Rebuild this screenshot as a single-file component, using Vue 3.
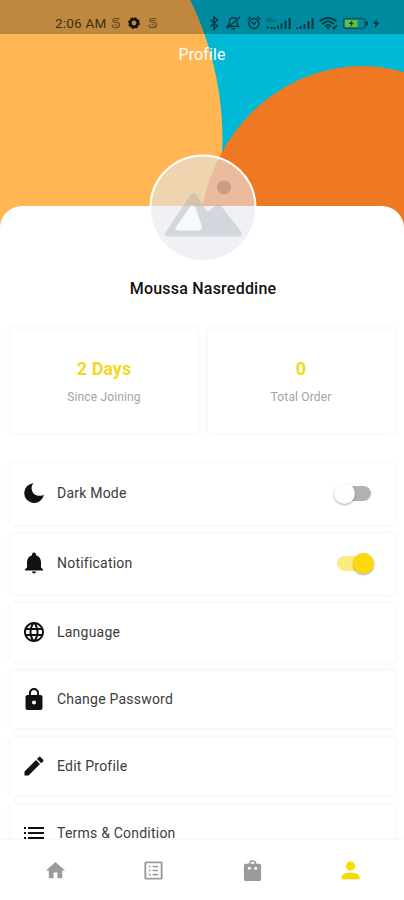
<script setup>
import { ref } from 'vue'

const stats = [
  { value: '2 Days', label: 'Since Joining' },
  { value: '0', label: 'Total Order' }
]

const settings = ref([
  { icon: 'moon', label: 'Dark Mode', toggle: true, on: false },
  { icon: 'bell', label: 'Notification', toggle: true, on: true },
  { icon: 'globe', label: 'Language' },
  { icon: 'lock', label: 'Change Password' },
  { icon: 'pencil', label: 'Edit Profile' },
  { icon: 'list', label: 'Terms & Condition' }
])

const icons = {
  moon: 'M11.500 2.200A9.900 9.900 0 1 0 21.900 13.500Q20.500 15 17.500 14.800A7.600 7.600 0 0 1 11.500 2.200z',
  bell: 'M12 22.500c1.100 0 2-.9 2-2h-4c0 1.100.9 2 2 2zm7-6V11c0-3.100-2-5.900-5-6.700V3.500a2 2 0 0 0-4 0v.8C7 5.100 5 7.900 5 11v5.500L3 18.500v1h18v-1z',
  globe: 'M11.990 2C6.470 2 2 6.480 2 12s4.470 10 9.990 10C17.520 22 22 17.520 22 12S17.520 2 11.990 2zm6.930 6h-2.950c-.32-1.250-.78-2.450-1.380-3.560 1.840.63 3.370 1.910 4.330 3.560zM12 4.040c.83 1.200 1.480 2.530 1.910 3.960h-3.820c.43-1.430 1.080-2.760 1.910-3.960zM4.260 14C4.100 13.360 4 12.690 4 12s.1-1.360.26-2h3.380c-.08.66-.14 1.320-.14 2s.06 1.340.14 2H4.260zm.82 2h2.950c.32 1.250.78 2.450 1.380 3.560-1.840-.63-3.370-1.900-4.330-3.560zm2.950-8H5.080c.96-1.660 2.490-2.930 4.330-3.560C8.810 5.550 8.350 6.750 8.030 8zM12 19.960c-.83-1.200-1.480-2.530-1.910-3.960h3.820c-.43 1.430-1.080 2.760-1.910 3.960zM14.340 14H9.660c-.09-.66-.16-1.320-.16-2s.07-1.350.16-2h4.680c.09.65.16 1.320.16 2s-.07 1.340-.16 2zm.25 5.560c.6-1.110 1.060-2.310 1.380-3.560h2.950c-.96 1.650-2.490 2.930-4.330 3.560zM16.360 14c.08-.66.14-1.320.14-2s-.06-1.340-.14-2h3.380c.16.64.26 1.310.26 2s-.1 1.360-.26 2h-3.380z',
  lock: 'M18.500 8H17V6c0-2.760-2.240-5-5-5S7 3.240 7 6v2H5.500c-1.100 0-2 .9-2 2v11c0 1.100.9 2 2 2h13c1.100 0 2-.9 2-2V10c0-1.100-.9-2-2-2zM12 17.500c-1.100 0-2-.9-2-2s.9-2 2-2 2 .9 2 2-.9 2-2 2zm3.100-9.500H8.900V6c0-1.710 1.390-3.100 3.100-3.100s3.100 1.390 3.100 3.100v2z',
  pencil: 'M2.500 17.500V21.500h4L18 10l-4-4L2.500 17.500zM21.200 7.200a1 1 0 0 0 0-1.410l-2.840-2.840a1 1 0 0 0-1.410 0l-2 2 4.250 4.250 2-2z',
  list: 'M2 6h2v2H2zm4 0h16v2H6zM2 11h2v2H2zm4 0h16v2H6zM2 16h2v2H2zm4 0h16v2H6z',
  home: 'M10 20v-6h4v6h5v-8h3L12 3 2 12h3v8z',
  orders: 'M19.500 4.500v15h-15v-15h15m.6-2H3.900c-.8 0-1.400.6-1.400 1.400v16.200c0 .8.6 1.400 1.400 1.400h16.200c.8 0 1.400-.6 1.400-1.400V3.900c0-.8-.6-1.400-1.400-1.400zM11 7h6v1.700h-6zm0 4.200h6v1.700h-6zm0 4.200h6v1.700h-6zM7 7h2v1.700H7zm0 4.200h2v1.700H7zm0 4.200h2v1.700H7z',
  bag: 'M19 5h-2.900C15.700 2.600 14.200 1 12 1S8.300 2.600 7.900 5H5c-1.100 0-2 .9-2 2v14c0 1.100.9 2 2 2h14c1.100 0 2-.9 2-2V7c0-1.100-.9-2-2-2zM12 2.700c1.200 0 2 .9 2.200 2.300H9.800C10 3.600 10.800 2.700 12 2.700zM8.700 11.300a1.600 1.600 0 1 1 0-3.200 1.600 1.600 0 0 1 0 3.200zm6.600 0a1.600 1.600 0 1 1 0-3.200 1.600 1.600 0 0 1 0 3.200z',
  person: 'M12 12a4.700 4.700 0 1 0 0-9.400 4.700 4.700 0 0 0 0 9.400zm0 2c-3 0-9.500 1.500-9.500 4.800v2.200h19v-2.200c0-3.300-6.500-4.800-9.500-4.800z'
}

const tabs = ['home', 'orders', 'bag', 'person']
const activeTab = ref('person')
</script>

<template>
  <div class="screen">
    <header class="hero">
      <svg class="hero-art" viewBox="0 0 404 240" aria-hidden="true">
        <rect width="404" height="240" fill="#00b9d6" />
        <circle cx="-97.500" cy="140" r="320" fill="#ffb653" />
        <ellipse cx="362" cy="242" rx="163" ry="176" fill="#ef7922" />
      </svg>

      <div class="status-bar">
        <div class="status-left">
          <span class="time">2:06 AM</span>
          <svg class="swirl" width="10" height="12" viewBox="0 0 10 12"><path d="M8.500 1.500H4.500C1 1.500 1 5.500 4.500 5.500H6C9.500 5.500 9.500 10.700 5 10.700S1 8.500 1.500 7.500M3.500 3.500h4M3.500 8h3" /></svg>
          <svg class="gear" width="12" height="12" viewBox="0 0 12 12"><circle cx="6" cy="6" r="3.800" /><circle class="teeth" cx="6" cy="6" r="5.300" /></svg>
          <svg class="swirl" width="10" height="12" viewBox="0 0 10 12"><path d="M8.500 1.500H4.500C1 1.500 1 5.500 4.500 5.500H6C9.500 5.500 9.500 10.700 5 10.700S1 8.500 1.500 7.500M3.500 3.500h4M3.500 8h3" /></svg>
        </div>
        <svg class="status-right" width="172" height="16" viewBox="0 0 172 16">
          <g class="line">
            <path d="M1.500 4.500l7 6.500L5 14V2l3.500 3-7 6.500" />
            <path d="M18.500 11.500h11c-1.500-1.300-1.500-3-1.500-5 0-5-7.500-5-7.500 0 0 2 0 3.700-2 5zM18 13.500L31 2M22.500 13.700h3.500" />
            <circle cx="45" cy="8.500" r="5" />
            <path d="M42.500 7l2.500 2 2.500-2M38.500 4.500l3.200-2.800M51.500 4.500l-3.200-2.800" />
          </g>
          <g class="fill">
            <path d="M68 10.500h2v3.500h-2zM71.500 8.500h2v5.500h-2zM75.500 5.500h2v8.500h-2zM79.500 3h2.200v11h-2.200zM64.500 12h2v2h-2zM57.500 11l3.500 1.500-3.500 1.500zM61.500 12h2v2h-2z" />
            <path d="M87 12.500h2v1.500h-2zM90.500 11h2v3h-2zM94.500 9h2v5h-2zM98.500 6h2v8h-2zM102.500 3h2.200v11h-2.200z" />
            <path d="M168.500 3l-4.500 6h2.700l-1 4.500 4.800-6.200h-3z" />
          </g>
          <text x="57" y="6.500">4G+</text>
          <g class="line wifi">
            <path d="M110.500 6.300c5-4.500 12-4.500 17 0M113.200 9c3.500-3.300 8-3.300 11.600 0M116 11.300c2-1.800 4-1.800 6 0" />
            <path d="M123.500 12l1.500 1.500 3-3.500" />
          </g>
          <path class="fill" d="M117 12l2 2.300 2-2.300z" />
          <rect class="shell" x="134.500" y="3.500" width="21.500" height="10" rx="2.500" />
          <rect class="charge" x="136" y="5" width="12.500" height="7" rx=".5" />
          <path class="fill" d="M143.500 5l-4 4h2.500l-1 3 4-4.200h-2.500zM157 6.500h1.800v4H157z" />
        </svg>
      </div>
      <h1 class="title">Profile</h1>
    </header>

    <main class="sheet">
      <svg class="avatar" viewBox="0 0 108 108" aria-hidden="true">
        <circle cx="54" cy="54" r="52.500" fill="#e4e7ef" fill-opacity=".6" />
        <path class="avatar-ring" d="M1.400 54a52.600 52.600 0 0 1 105.200 0" />
        <circle cx="54" cy="54" r="52.500" fill="none" stroke="#fff" stroke-opacity=".5" stroke-width="1.500" />
        <path
          fill="#8e9ca9"
          fill-opacity=".3"
          fill-rule="evenodd"
          d="M41.500 41q3-4 6 0l11 17 8.500-6.500q3-2 5.500 1l19.500 25q2 5-2 5H19q-5-1-2-5zM41 53L27 73q-2 3.500 2 3.500h21q3.500-.5 2.500-5l-6-18q-2.500-3.500-5.500-.5z"
        />
        <path d="M41 53L27 73q-2 3.500 2 3.500h21q3.500-.5 2.500-5l-6-18q-2.500-3.500-5.500-.5z" fill="#fff" fill-opacity=".55" />
        <circle cx="75" cy="33.500" r="7" fill="#a5705c" fill-opacity=".42" />
      </svg>

      <h2 class="name">Moussa Nasreddine</h2>

      <section class="stats">
        <div v-for="stat in stats" :key="stat.label" class="card stat">
          <strong>{{ stat.value }}</strong>
          <span>{{ stat.label }}</span>
        </div>
      </section>

      <ul class="settings">
        <li
          v-for="item in settings"
          :key="item.label"
          class="card row"
          :class="{ 'has-toggle': item.toggle }"
          @click="item.toggle && (item.on = !item.on)"
        >
          <svg class="row-icon" viewBox="0 0 24 24"><path :d="icons[item.icon]" /></svg>
          <span class="row-label">{{ item.label }}</span>
          <span v-if="item.toggle" class="switch" :class="{ on: item.on }">
            <span class="thumb" />
          </span>
        </li>
      </ul>
    </main>

    <nav class="tabs">
      <button
        v-for="tab in tabs"
        :key="tab"
        class="tab"
        :class="{ active: tab === activeTab }"
        :aria-label="tab"
        @click="activeTab = tab"
      >
        <svg viewBox="0 0 24 24"><path :d="icons[tab]" /></svg>
      </button>
    </nav>
  </div>
</template>

<style>
body {
  background: #fff;
}
</style>

<style scoped>
.screen {
  display: flex;
  flex-direction: column;
  width: 404px;
  height: 900px;
  overflow: hidden;
  background: #fff;
  font-family: Roboto, sans-serif;
}

.hero {
  position: relative;
  flex: none;
  height: 206px;
}

/* el fondo continúa detrás de las esquinas de la hoja */
.hero-art {
  position: absolute;
  top: 0;
  left: 0;
  width: 404px;
  height: 240px;
}

.status-bar {
  position: relative;
  display: flex;
  align-items: center;
  justify-content: space-between;
  box-sizing: border-box;
  height: 34px;
  padding: 12px 24px 0 55px;
  background: rgba(0, 0, 0, 0.25);
}

.status-left {
  display: flex;
  align-items: center;
  color: #3b2d1a;
}

.time {
  margin-right: 5px;
  font-size: 13.5px;
  letter-spacing: 0.2px;
  line-height: 16px;
}

.swirl {
  fill: none;
  stroke: #654824;
  stroke-width: 1.2;
}

.gear {
  margin: 0 8px 0 7px;
  fill: none;
  stroke: #17120b;
  stroke-width: 2.8;
}

.gear .teeth {
  stroke-width: 1.2;
  stroke-dasharray: 2.1 2.06;
}

.status-right {
  margin-right: -1px;
  overflow: visible;
}

.status-right text {
  fill: #0b4652;
  font-size: 6px;
}

.line {
  fill: none;
  stroke: #073943;
  stroke-width: 1.5;
}

.wifi {
  stroke-width: 1.9;
}

.fill {
  fill: #073943;
}

.shell {
  fill: none;
  stroke: #155661;
  stroke-width: 1.4;
}

.charge {
  fill: #63c42c;
}

.title {
  position: relative;
  margin: 11px 0 0;
  color: #fff;
  font-size: 16px;
  font-weight: 400;
  letter-spacing: 0.1px;
  line-height: 20px;
  text-align: center;
}

.sheet {
  position: relative;
  flex: none;
  box-sizing: border-box;
  height: 634px;
  padding: 73px 9px 0 11px;
  border-radius: 22px 22px 0 0;
  background: #fff;
}

.avatar {
  position: absolute;
  top: -52px;
  left: 149px;
  width: 108px;
  height: 108px;
}

.avatar-ring {
  fill: none;
  stroke: #fff;
  stroke-width: 2;
}

.name {
  margin: 0;
  color: #111;
  font-size: 16px;
  font-weight: 500;
  letter-spacing: 0.22px;
  line-height: 20px;
  text-align: center;
}

.card {
  border-radius: 4px;
  background: #fff;
  box-shadow: 0 0 5px 2px rgba(0, 0, 0, 0.035);
}

.stats {
  display: grid;
  grid-template-columns: 1fr 1fr;
  gap: 10px;
  margin-top: 30px;
}

.stat {
  display: flex;
  flex-direction: column;
  align-items: center;
  box-sizing: border-box;
  height: 104px;
  padding: 29px 1px 0 0;
}

.stat strong {
  color: #f3d91c;
  font-size: 18px;
  font-weight: 700;
  line-height: 22px;
}

.stat span {
  margin-top: 9px;
  color: #a3a3a3;
  font-size: 12px;
  letter-spacing: 0.15px;
  line-height: 16px;
}

.settings {
  display: flex;
  flex-direction: column;
  gap: 10px;
  margin: 31px 0 0;
  padding: 0;
  list-style: none;
}

.row {
  display: flex;
  align-items: center;
  box-sizing: border-box;
  height: 57px;
  padding: 0 24px 1px 11px;
}

.row.has-toggle {
  height: 60px;
  padding-bottom: 2px;
}

.row-icon {
  width: 24px;
  height: 24px;
  fill: #111;
}

.row-label {
  margin-left: 11px;
  color: #3c3c3c;
  font-size: 14px;
  letter-spacing: 0.22px;
}

.switch {
  position: relative;
  width: 34px;
  height: 15px;
  margin-left: auto;
  border-radius: 8px;
  background: #b2b2b2;
}

.thumb {
  position: absolute;
  top: -3px;
  left: -3px;
  width: 21px;
  height: 21px;
  border-radius: 50%;
  background: #fdfdfd;
  box-shadow: 0 1px 2px rgba(0, 0, 0, 0.35);
}

.switch.on {
  background: #fbec82;
}

.switch.on .thumb {
  left: 16px;
  background: #fdd80a;
}

.tabs {
  position: relative;
  display: grid;
  grid-template-columns: repeat(4, 1fr);
  flex: none;
  box-sizing: border-box;
  height: 60px;
  padding: 0 4px 0 6px;
  background: #fff;
  box-shadow: 0 -1px 2px rgba(0, 0, 0, 0.04);
}

.tab {
  display: grid;
  place-items: center;
  padding: 1px 0 0;
  border: 0;
  background: none;
}

.tab svg {
  width: 23px;
  height: 23px;
  fill: #9b9b9b;
}

.tab.active svg {
  fill: #f8dc00;
}
</style>
